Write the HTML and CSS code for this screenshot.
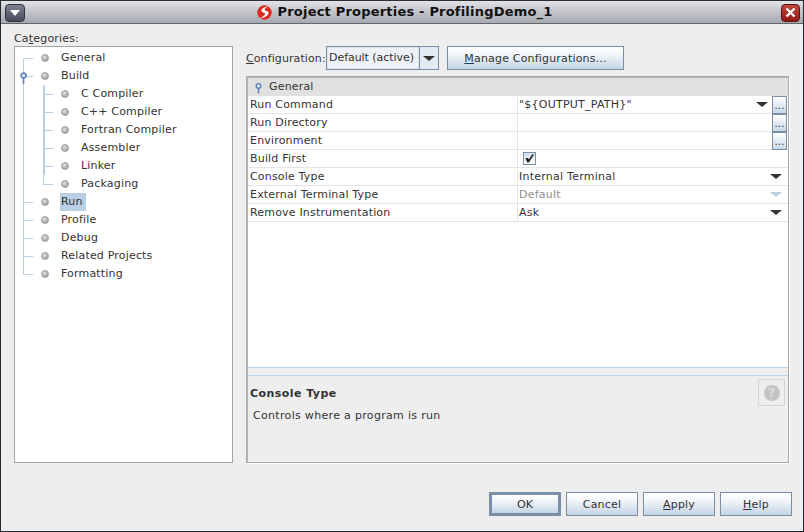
FILE: index.html
```html
<!DOCTYPE html>
<html lang="en">
<head>
<meta charset="utf-8">
<title>Project Properties - ProfilingDemo_1</title>
<link rel="stylesheet" href="styles.css">
</head>
<body>
<div class="window">
  <header class="titlebar">
    <button class="menu-btn" aria-label="Window menu"><svg width="10" height="6" viewBox="0 0 10 6"><path d="M0 0H10L5 6Z" fill="#fff"/></svg></button>
    <div class="title">
      <svg class="logo" width="15" height="15" viewBox="0 0 15 15"><circle cx="7.5" cy="7.5" r="7.2" fill="#e0281c"/><path d="M11.5 1.2C7.5 1.8 4.6 3.4 4.4 5.6C4.2 7.8 8.2 7.4 8.1 8.8C8 10 6 11.8 2.8 13.4C7 13 11.4 10.8 11.5 8C11.6 5.6 7.6 6 7.6 4.8C7.6 3.8 9.2 2.4 11.5 1.2Z" fill="#fff"/></svg>
      <span>Project Properties - ProfilingDemo_1</span>
    </div>
    <button class="close-btn" aria-label="Close"><svg width="11" height="11" viewBox="0 0 11 11"><path d="M1.5 1.5L9.5 9.5M9.5 1.5L1.5 9.5" stroke="#fff" stroke-width="2.4"/></svg></button>
  </header>
  <main class="main">
    <div class="panes">
      <section class="left">
        <label class="cat-label">Ca<u>t</u>egories:</label>
        <div class="tree">
          <div class="node top first"><i class="dot"></i><span>General</span></div>
          <div class="node top open"><svg class="expander" width="7" height="12" viewBox="0 0 7 12"><circle cx="3.5" cy="3.5" r="2.4" fill="#fff" stroke="#5f82bd" stroke-width="1.7"/><path d="M3.5 5.5V12" stroke="#5f82bd" stroke-width="1.7"/></svg><i class="dot"></i><span>Build</span></div>
          <div class="node child"><i class="dot"></i><span>C Compiler</span></div>
          <div class="node child"><i class="dot"></i><span>C++ Compiler</span></div>
          <div class="node child"><i class="dot"></i><span>Fortran Compiler</span></div>
          <div class="node child"><i class="dot"></i><span>Assembler</span></div>
          <div class="node child"><i class="dot"></i><span>Linker</span></div>
          <div class="node child last"><i class="dot"></i><span>Packaging</span></div>
          <div class="node top"><i class="dot"></i><span class="selected">Run</span></div>
          <div class="node top"><i class="dot"></i><span>Profile</span></div>
          <div class="node top"><i class="dot"></i><span>Debug</span></div>
          <div class="node top"><i class="dot"></i><span>Related Projects</span></div>
          <div class="node top last"><i class="dot"></i><span>Formatting</span></div>
        </div>
      </section>
      <section class="right">
        <div class="config-row">
          <label class="config-label"><u>C</u>onfiguration:</label>
          <div class="combo"><span class="combo-value">Default (active)</span><span class="combo-arrow"><i class="arrow"></i></span></div>
          <button class="btn manage"><u>M</u>anage Configurations...</button>
        </div>
        <div class="props">
          <div class="sheet">
            <div class="group"><svg width="7" height="11" viewBox="0 0 7 11"><circle cx="3.5" cy="3" r="2.2" fill="#fff" stroke="#5f82bd" stroke-width="1.6"/><path d="M3.5 5V10.5" stroke="#5f82bd" stroke-width="1.6"/></svg><span>General</span></div>
            <div class="row"><div class="key">Run Command</div><div class="val">"${OUTPUT_PATH}"<i class="arrow shift"></i></div><button class="dots">...</button></div>
            <div class="row"><div class="key">Run Directory</div><div class="val"></div><button class="dots">...</button></div>
            <div class="row"><div class="key">Environment</div><div class="val"></div><button class="dots">...</button></div>
            <div class="row"><div class="key">Build First</div><div class="val"><span class="check"><svg width="9" height="9" viewBox="0 0 9 9"><path d="M0.5 4H3L4 5.5L7 0.5H9L4 8.5H2.2Z" fill="#222"/></svg></span></div></div>
            <div class="row"><div class="key">Console Type</div><div class="val">Internal Terminal<i class="arrow"></i></div></div>
            <div class="row"><div class="key">External Terminal Type</div><div class="val muted">Default<i class="arrow pale"></i></div></div>
            <div class="row"><div class="key">Remove Instrumentation</div><div class="val">Ask<i class="arrow"></i></div></div>
          </div>
          <div class="split"></div>
          <div class="desc">
            <div class="desc-text">
              <h2>Console Type</h2>
              <p>Controls where a program is run</p>
            </div>
            <button class="help-icon" aria-label="Help"><span>?</span></button>
          </div>
        </div>
      </section>
    </div>
    <footer class="footer">
      <button class="btn action default">OK</button>
      <button class="btn action">Cancel</button>
      <button class="btn action"><u>A</u>pply</button>
      <button class="btn action"><u>H</u>elp</button>
    </footer>
  </main>
</div>
</body>
</html>
```
FILE: styles.css
```css
* { box-sizing: border-box; }
html, body { margin: 0; padding: 0; }
body { width: 804px; height: 532px; overflow: hidden; font: 11px/14px "DejaVu Sans", sans-serif; letter-spacing: .18px; color: #333; background: #eee; }
button { font: inherit; letter-spacing: inherit; color: inherit; padding: 0; margin: 0; }
u { text-underline-offset: 1px; }

.window { width: 804px; height: 532px; display: flex; flex-direction: column; border: 1px solid #23262a; border-top-color: #2a2d33; background: #eee; }

.titlebar { flex: none; height: 23px; display: flex; align-items: center; padding: 1px 3px 0 4px; background: linear-gradient(#e2e3e6, #c4c6cb 45%, #a6a9b0); border-bottom: 1px solid #63666c; }
.menu-btn { width: 20px; height: 18px; border: 1px solid #2f3340; border-radius: 4px; background: linear-gradient(#7d8290, #474c5c); display: flex; align-items: center; justify-content: center; }
.title { flex: 1; display: flex; align-items: center; justify-content: center; gap: 6px; font-weight: bold; font-size: 13px; color: #111; padding: 0 0 2px 3px; letter-spacing: .2px; }
.logo { margin-top: 2px; }
.close-btn { width: 19px; height: 18px; border: 1px solid #5c1410; border-radius: 4px; background: linear-gradient(#c5453a, #8c1a14); display: flex; align-items: center; justify-content: center; }

.main { flex: 1; display: flex; flex-direction: column; min-height: 0; }
.panes { flex: 1; min-height: 0; display: grid; grid-template-columns: 219px 543px; column-gap: 13px; padding: 8px 0 0 13px; }
.left { display: flex; flex-direction: column; min-height: 0; }
.cat-label { height: 14px; flex: none; }
.tree { flex: 1; background: #fff; border: 1px solid #a4a4a4; padding-top: 2px; }

.node { position: relative; height: 18px; display: flex; align-items: center; padding-left: 46px; }
.node.child { padding-left: 66px; }
.dot { position: absolute; left: 26px; top: 5px; width: 8px; height: 8px; border-radius: 50%; background: radial-gradient(circle at 40% 35%, #e2e2e2, #8e8e8e); border: 1px solid #a0a0a0; }
.child .dot { left: 46px; }
.selected { background: #b8cfe5; padding: 0 3px 0 1px; margin-left: -1px; line-height: 18px; height: 18px; }
.node::before { content: ""; position: absolute; left: 8px; top: 0; bottom: 0; width: 10px; border-left: 1px solid #b8cfe5; }
.node::after { content: ""; position: absolute; left: 8px; top: 9px; width: 10px; border-top: 1px solid #b8cfe5; }
.node.first::before { top: 9px; }
.node.last::before { bottom: 9px; }
.node.child::after { left: 28px; }
.node.child::before { box-shadow: 20px 0 0 0 #b8cfe5; width: 1px; }
.node.child.last::before { bottom: 0; box-shadow: none; }
.node.child.last { background: linear-gradient(#b8cfe5, #b8cfe5) 28px 0 / 1px 10px no-repeat; }
.expander { position: absolute; left: 5px; top: 5px; z-index: 1; }

.right { display: flex; flex-direction: column; min-height: 0; padding-top: 14px; }
.config-row { flex: none; height: 30px; display: flex; align-items: flex-start; }
.config-label { line-height: 25px; width: 80px; flex: none; letter-spacing: .1px; }
.combo { width: 113px; height: 24px; border: 1px solid #7a8ea6; display: flex; background: #eef1f5; letter-spacing: -.05px; }
.combo-value { flex: 1; padding-left: 1px; line-height: 19px; border: 1px solid #dfe3e8; }
.combo-arrow { width: 19px; border-left: 1px solid #7a8ea6; display: flex; align-items: center; justify-content: center; background: #e3eaf2; }
.btn { border: 1px solid #7a8ea6; background: linear-gradient(#fff 0%, #f4f7fa 30%, #c4d4e6 100%); padding-top: 1px; }
.manage { width: 177px; height: 24px; margin-left: 8px; padding-top: 2px; }

.arrow { display: inline-block; width: 0; height: 0; border-left: 6px solid transparent; border-right: 6px solid transparent; border-top: 5px solid #333; }
.val .arrow { position: absolute; right: 6px; top: 6px; }
.val .arrow.shift { right: 20px; }
.val .arrow.pale { border-top-color: #b8cfe5; }

.props { flex: 1; min-height: 0; display: flex; flex-direction: column; border: 1px solid #a8a8a8; box-shadow: inset 1px 1px 0 #b5b5b5, 1px 1px 0 #fff; padding: 1px 0 0 1px; }
.sheet { height: 289px; background: #fff; flex: none; }
.group { height: 18px; background: #e0e0e0; display: flex; align-items: center; gap: 7px; padding-left: 7px; }
.group svg { margin-top: 3px; }
.row { position: relative; height: 18px; display: grid; grid-template-columns: 270px 1fr; border-bottom: 1px solid #e4e4e4; }
.key { padding-left: 2px; line-height: 17px; border-right: 1px solid #e4e4e4; }
.val { position: relative; padding-left: 1px; line-height: 17px; letter-spacing: .24px; }
.val.muted { color: #8f8f8f; }
.dots { position: absolute; right: 1px; top: 0; width: 15px; height: 18px; border: 1px solid #7a8ea6; background: linear-gradient(#fff, #c9d8e8); line-height: 18px; font-size: 10px; }
.check { display: inline-flex; align-items: center; justify-content: center; width: 13px; height: 13px; margin: 2px 0 0 4px; border: 1px solid #7a8ea6; background: linear-gradient(#d4dfea, #fff); }
.split { height: 9px; flex: none; border-top: 1px solid #b8d4ea; border-bottom: 1px solid #b8d4ea; }
.desc { flex: 1; display: flex; justify-content: space-between; padding: 3px 3px 0 2px; }
.desc h2 { margin: 8px 0 0 0; font-size: 11px; line-height: 14px; font-weight: bold; letter-spacing: .45px; }
.desc p { margin: 8px 0 0 3px; letter-spacing: .32px; }
.help-icon { width: 27px; height: 27px; border: 1px solid #d6d6d6; background: #eee; display: flex; align-items: center; justify-content: center; }
.help-icon span { width: 16px; height: 16px; border-radius: 50%; background: #c4c4c4; color: #ddd; font-weight: bold; font-size: 12px; line-height: 16px; }

.footer { flex: none; height: 68px; display: flex; justify-content: flex-end; gap: 5px; padding: 29px 11px 14px 0; }
.action { width: 72px; height: 24px; }
.default { border: 3px solid #7a8ea6; }
```
